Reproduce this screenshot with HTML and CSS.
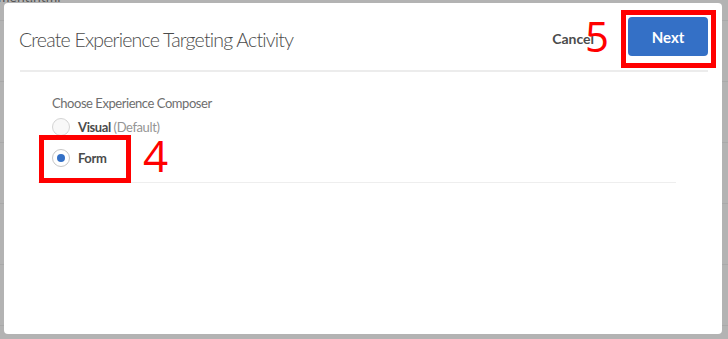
FILE: index.html
```html
<!DOCTYPE html>
<html lang="en">
<head>
<meta charset="UTF-8">
<title>Create Experience Targeting Activity</title>
<link rel="stylesheet" href="styles.css">
</head>
<body>
    <div class="crumb"><span>ment.html</span></div>
    <div class="dialog">
        <div class="dialog-header">
            <h1 class="dialog-title">Create Experience Targeting Activity</h1>
            <div class="actions">
                <button class="btn-quiet">Cancel</button>
                <button class="btn-primary">Next</button>
            </div>
        </div>
        <div class="dialog-body">
            <div class="field-label">Choose Experience Composer</div>
            <label class="radio-row">
                <span class="radio"></span>
                <span class="radio-text">Visual <span class="muted">(Default)</span></span>
            </label>
            <label class="radio-row">
                <span class="radio checked"></span>
                <span class="radio-text">Form</span>
            </label>
        </div>
    </div>

    <div class="mark mark-next"></div>
    <div class="step step-5">5</div>
    <div class="mark mark-form"></div>
    <div class="step step-4">4</div>
</body>
</html>
```

FILE: styles.css
```css
body {
    margin: 0;
    height: 339px;
    overflow: hidden;
    font-family: 'Lato', 'Open Sans', sans-serif;
    background: repeating-linear-gradient(to bottom, #b3b3b3 0 20px, #a9a9a9 20px 21px, #b3b3b3 21px 61px);
}

.crumb {
    height: 3px;
    overflow: hidden;
    font-size: 14px;
    color: #555;
}
.crumb span {
    display: block;
    margin-top: -12px;
    margin-left: -2px;
}

.dialog {
    margin-left: 4px;
    width: 718px;
    height: 331px;
    background: #fff;
    border-radius: 4px;
}

.dialog-header {
    display: flex;
    align-items: center;
    height: 69px;
    box-sizing: border-box;
    margin: 0 14px 0 16px;
    border-bottom: 2px solid #ececec;
}
.dialog-title {
    margin: 0 0 0 -1px;
    padding-top: 6px;
    font-size: 19.5px;
    font-weight: 300;
    letter-spacing: -0.8px;
    color: #4b4b4b;
}
.actions {
    margin-left: auto;
    display: flex;
    align-items: center;
    gap: 34px;
}
.btn-quiet {
    padding: 3px 0 0;
    border: none;
    background: none;
    font-family: inherit;
    font-size: 14px;
    font-weight: 700;
    color: #4b4b4b;
}
.btn-primary {
    width: 80px;
    height: 39px;
    border: none;
    border-radius: 4px;
    background: #3470c6;
    color: #fff;
    font-family: inherit;
    font-size: 15px;
    font-weight: 700;
}

.dialog-body {
    margin: 0 46px 0 34px;
    padding: 23px 0 9px 14px;
    border-bottom: 1px solid #eeeeee;
}
.field-label {
    font-size: 13px;
    line-height: 16px;
    letter-spacing: -0.45px;
    color: #6e6e6e;
}
.radio-row {
    display: flex;
    align-items: center;
    gap: 8px;
    height: 31px;
}
.radio {
    width: 18px;
    height: 18px;
    box-sizing: border-box;
    border: 1.5px solid #d4d4d4;
    border-radius: 50%;
    background: #f8f8f8;
    display: flex;
    align-items: center;
    justify-content: center;
}
.radio.checked {
    border-color: #c6c6c6;
    background: #fff;
}
.radio.checked::after {
    content: "";
    width: 8px;
    height: 8px;
    border-radius: 50%;
    background: #3470c6;
}
.radio-text {
    font-size: 13px;
    font-weight: 700;
    letter-spacing: -0.4px;
    color: #4b4b4b;
}
.muted {
    font-weight: 400;
    color: #959595;
}

/* annotations drawn on top of the screenshot */
.mark {
    position: absolute;
    box-sizing: border-box;
    border: 5px solid #ff0000;
}
.mark-next {
    left: 621px;
    top: 10px;
    width: 95px;
    height: 58px;
}
.mark-form {
    left: 39px;
    top: 135px;
    width: 92px;
    height: 48px;
}
.step {
    position: absolute;
    color: #ff0000;
    font-family: 'Open Sans', sans-serif;
    line-height: 1;
}
.step-5 {
    left: 585px;
    top: 15px;
    font-size: 42px;
}
.step-4 {
    left: 143px;
    top: 133px;
    font-size: 44px;
}
```
